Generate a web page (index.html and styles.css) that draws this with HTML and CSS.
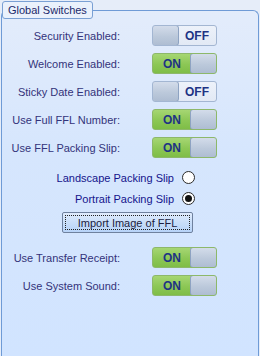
FILE: index.html
```html
<!DOCTYPE html>
<html lang="en">
<head>
    <meta charset="UTF-8">
    <title>Global Switches</title>
    <link rel="stylesheet" href="styles.css">
</head>
<body>

    <!-- Settings group -->
    <fieldset class="group">
        <legend>Global Switches</legend>

        <div class="switch-list">
            <div class="switch-row">
                <span class="label">Security Enabled:</span>
                <span class="toggle off"><span class="knob"></span><span class="state">OFF</span></span>
            </div>
            <div class="switch-row">
                <span class="label">Welcome Enabled:</span>
                <span class="toggle on"><span class="state">ON</span><span class="knob"></span></span>
            </div>
            <div class="switch-row">
                <span class="label">Sticky Date Enabled:</span>
                <span class="toggle off"><span class="knob"></span><span class="state">OFF</span></span>
            </div>
            <div class="switch-row">
                <span class="label">Use Full FFL Number:</span>
                <span class="toggle on"><span class="state">ON</span><span class="knob"></span></span>
            </div>
            <div class="switch-row">
                <span class="label">Use FFL Packing Slip:</span>
                <span class="toggle on"><span class="state">ON</span><span class="knob"></span></span>
            </div>
        </div>

        <!-- Packing slip layout -->
        <div class="radio-list">
            <label class="radio-row">Landscape Packing Slip <span class="radio"></span></label>
            <label class="radio-row">Portrait Packing Slip <span class="radio checked"></span></label>
        </div>

        <button class="import-btn"><span class="focus">Import Image of FFL</span></button>

        <div class="switch-list lower">
            <div class="switch-row">
                <span class="label">Use Transfer Receipt:</span>
                <span class="toggle on"><span class="state">ON</span><span class="knob"></span></span>
            </div>
            <div class="switch-row">
                <span class="label">Use System Sound:</span>
                <span class="toggle on"><span class="state">ON</span><span class="knob"></span></span>
            </div>
        </div>
    </fieldset>

</body>
</html>
```

FILE: styles.css
```css
/* General */
* {
    box-sizing: border-box;
}
body {
    margin: 0;
    height: 356px;
    overflow: hidden;
    background: #e6edf9;
    font-family: "Liberation Sans", Arial, sans-serif;
    font-size: 11px;
    color: #33337a;
}

/* Group box */
.group {
    margin: 1px 1px 0 1px;
    padding: 0;
    min-width: 0;
    height: 355px;
    border: 1px solid #6f9bd6;
    border-bottom: 0;
    border-radius: 6px 6px 0 0;
    background: linear-gradient(180deg, #e3ecfb 0%, #d6e6fd 40%, #d1e4ff 100%);
}
.group legend {
    margin-left: 0;
    padding: 0 5px;
    height: 18px;
    line-height: 16px;
    border: 1px solid #7aa0d4;
    border-radius: 3px;
    background: #eaf1fc;
    color: #1c2a6a;
    font-size: 11px;
}

/* Switch rows */
.switch-list {
    display: flex;
    flex-direction: column;
    gap: 7px;
    margin-top: 6px;
}
.switch-list.lower {
    margin-top: 14px;
}
.switch-row {
    display: grid;
    grid-template-columns: 118px 65px;
    column-gap: 32px;
    align-items: center;
    height: 21px;
}
.switch-row .label {
    text-align: right;
}

/* Toggle */
.toggle {
    display: flex;
    width: 65px;
    height: 21px;
    border: 1px solid #a3b6d2;
    border-radius: 3px;
    overflow: hidden;
    font-size: 12px;
    font-weight: bold;
    color: #1f3384;
}
.toggle .knob {
    width: 27px;
    background: linear-gradient(180deg, #d3dcea 0%, #bcc9db 55%, #aebdd2 100%);
    border: 1px solid #8ea3c2;
    border-radius: 3px;
    margin: -1px;
}
.toggle .state {
    flex: 1;
    display: flex;
    align-items: center;
    justify-content: center;
    line-height: 1;
}
.toggle.off {
    background: linear-gradient(180deg, #edf2fa 0%, #e2e9f5 100%);
}
.toggle.on {
    background: linear-gradient(180deg, #a6d673 0%, #8cc755 55%, #7fbd47 100%);
    border-color: #8db86a;
}

/* Radio buttons */
.radio-list {
    display: flex;
    flex-direction: column;
    width: 193px;
    margin-top: 9px;
}
.radio-row {
    display: flex;
    align-items: center;
    justify-content: flex-end;
    gap: 8px;
    height: 21px;
    color: #14148c;
}
.radio {
    display: flex;
    align-items: center;
    justify-content: center;
    width: 13px;
    height: 13px;
    border: 1px solid #2a2a2a;
    border-radius: 50%;
    background: #fff;
}
.radio.checked::after {
    content: "";
    width: 7px;
    height: 7px;
    border-radius: 50%;
    background: #111;
}

/* Import button */
.import-btn {
    display: block;
    margin: 3px 0 0 60px;
    width: 131px;
    height: 21px;
    padding: 2px;
    border: 1px solid #6f819e;
    border-radius: 2px;
    background: linear-gradient(180deg, #e0ecfd 0%, #c9def9 50%, #b7d3f8 100%);
    font-family: "Liberation Sans", Arial, sans-serif;
    font-size: 11px;
    color: #1c1c40;
}
.import-btn .focus {
    display: flex;
    align-items: center;
    justify-content: center;
    height: 100%;
    border: 1px dotted #222;
}
```
